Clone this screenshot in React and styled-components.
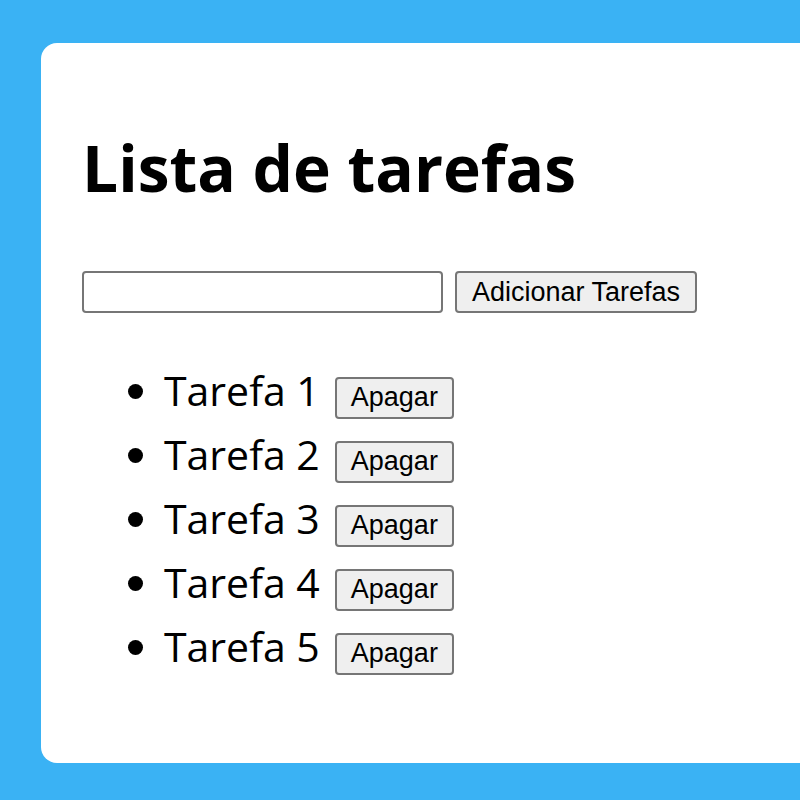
import React, { useState } from 'react';
import styled, { createGlobalStyle } from 'styled-components';

const GlobalStyle = createGlobalStyle`
  html, body {
    margin: 0;
    padding: 0;
    background: #3ab2f4;
    font-family: "Open Sans", sans-serif;
    overflow: hidden;
  }
`;

const Page = styled.div`
  width: 800px;
  height: 800px;
  padding: 43px 0 0 41px;
  box-sizing: border-box;
  overflow: hidden;
`;

const Card = styled.div`
  width: 800px;
  height: 720px;
  background: #fff;
  border-radius: 16px;
  padding: 0 41px;
  box-sizing: border-box;
  overflow: hidden;
`;

const Title = styled.h1`
  margin: 0;
  padding-top: 81px;
  font-size: 64px;
  font-weight: 700;
  color: #000;
`;

const Form = styled.div`
  display: flex;
  align-items: center;
  gap: 12px;
  margin-top: 60px;
`;

const Input = styled.input`
  width: 361px;
  height: 42px;
  box-sizing: border-box;
  border: 2px solid #767676;
  border-radius: 4px;
  padding: 2px 4px;
  font-size: 26px;
`;

const Button = styled.button`
  height: 42px;
  box-sizing: border-box;
  padding: 0 ${p => (p.small ? '14px' : '15px')};
  border: 2px solid #767676;
  border-radius: 4px;
  background: #efefef;
  color: #000;
  font-family: "Liberation Sans", Arial, sans-serif;
  font-size: 27px;
`;

const List = styled.ul`
  margin: 45px 0 0;
  padding-left: 82px;
`;

const Item = styled.li`
  font-size: 41px;
  line-height: 64px;
  color: #000;

  & > button {
    margin-left: 15px;
    vertical-align: baseline;
  }
`;

export default function App() {
  const [tarefas] = useState(['Tarefa 1', 'Tarefa 2', 'Tarefa 3', 'Tarefa 4', 'Tarefa 5']);

  return (
    <>
      <GlobalStyle />
      <Page>
        <Card>
          <Title>Lista de tarefas</Title>
          <Form>
            <Input type="text" />
            <Button>Adicionar Tarefas</Button>
          </Form>
          <List>
            {tarefas.map((t) => (
              <Item key={t}>
                {t}
                <Button small>Apagar</Button>
              </Item>
            ))}
          </List>
        </Card>
      </Page>
    </>
  );
}
